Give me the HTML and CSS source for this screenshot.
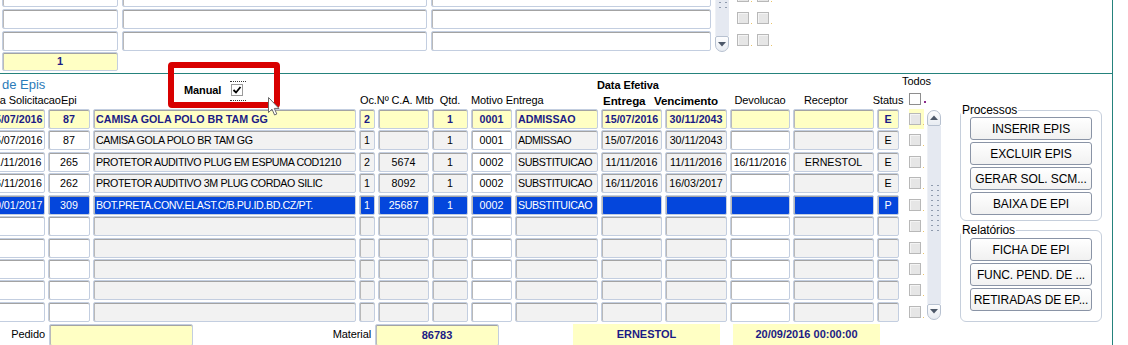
FILE: index.html
```html
<!DOCTYPE html>
<html lang="pt-BR">
  <head>
    <meta charset="UTF-8" />
    <title>Entrega de Epis</title>
    <link rel="stylesheet" href="styles.css">
  </head>
  <body>
    <div class="form">
      <div class="top">
        <div class="top-fields">
          <div class="trow"><span class="fld f1"></span><span class="fld f2"></span><span class="fld f3"></span></div>
          <div class="trow"><span class="fld f1"></span><span class="fld f2"></span><span class="fld f3"></span></div>
          <div class="trow"><span class="fld f1"></span><span class="fld f2"></span><span class="fld f3"></span></div>
          <div class="fld f1 yel">1</div>
        </div>
        <div class="sb sb-top">
          <div class="sb-track"><span class="grip short"></span></div>
          <div class="sb-btn down"><svg width="8" height="5" viewBox="0 0 8 5"><path d="M0 0H8L4 4.5Z" fill="#4d5869"/></svg></div>
        </div>
        <div class="top-checks">
          <span class="cb"></span><span class="cb"></span>
          <span class="cb"></span><span class="cb"></span>
          <span class="cb"></span><span class="cb"></span>
        </div>
      </div>

      <div class="lower">
        <div class="table">
          <div class="head">
            <div class="h h-title">de Epis</div>
            <div class="h h-manual">
              <b>Manual</b>
              <span class="focus"><span class="cb on"><svg width="10" height="10" viewBox="0 0 10 10"><path d="M1.5 5L4 7.5L8.5 2" fill="none" stroke="#000" stroke-width="1.8"/></svg></span></span>
            </div>
            <div class="h h-sol">Data Solicitacao<span>Epi</span></div>
            <div class="h h-oc">Oc.Nº C.A. Mtb</div>
            <div class="h h-qtd">Qtd.</div>
            <div class="h h-mot">Motivo Entrega</div>
            <div class="h h-data">Data Efetiva</div>
            <div class="h h-ent">Entrega</div>
            <div class="h h-venc">Vencimento</div>
            <div class="h h-dev">Devolucao</div>
            <div class="h h-rec">Receptor</div>
            <div class="h h-status">Status</div>
            <div class="h h-todos">Todos</div>
            <div class="h h-all"><span class="cb white"></span><span class="dot purple"></span></div>
          </div>

          <div class="rows">
            <div class="sb sb-grid">
              <div class="sb-btn up"><svg width="8" height="5" viewBox="0 0 8 5"><path d="M0 5H8L4 0.5Z" fill="#4d5869"/></svg></div>
              <div class="sb-track"><span class="grip"></span></div>
              <div class="sb-btn down"><svg width="8" height="5" viewBox="0 0 8 5"><path d="M0 0H8L4 4.5Z" fill="#4d5869"/></svg></div>
            </div>

            <div class="row cur">
              <span class="c w">15/07/2016</span><span class="c w">87</span>
              <span class="c l">CAMISA GOLA POLO BR TAM GG</span>
              <span class="c">2</span><span class="c"></span><span class="c">1</span>
              <span class="c w">0001</span><span class="c l">ADMISSAO</span>
              <span class="c">15/07/2016</span><span class="c">30/11/2043</span>
              <span class="c w"></span><span class="c"></span><span class="c">E</span>
              <span class="ck"><span class="cb"></span></span>
            </div>
            <div class="row">
              <span class="c w">15/07/2016</span><span class="c w">87</span>
              <span class="c l">CAMISA GOLA POLO BR TAM GG</span>
              <span class="c">1</span><span class="c"></span><span class="c">1</span>
              <span class="c w">0001</span><span class="c l">ADMISSAO</span>
              <span class="c">15/07/2016</span><span class="c">30/11/2043</span>
              <span class="c w"></span><span class="c"></span><span class="c">E</span>
              <span class="ck"><span class="cb"></span></span>
            </div>
            <div class="row">
              <span class="c w">11/11/2016</span><span class="c w">265</span>
              <span class="c l">PROTETOR AUDITIVO PLUG EM ESPUMA COD1210</span>
              <span class="c">2</span><span class="c">5674</span><span class="c">1</span>
              <span class="c w">0002</span><span class="c l">SUBSTITUICAO</span>
              <span class="c">11/11/2016</span><span class="c">11/11/2016</span>
              <span class="c w">16/11/2016</span><span class="c">ERNESTOL</span><span class="c">E</span>
              <span class="ck"><span class="cb"></span></span>
            </div>
            <div class="row">
              <span class="c w">16/11/2016</span><span class="c w">262</span>
              <span class="c l">PROTETOR AUDITIVO 3M PLUG CORDAO SILIC</span>
              <span class="c">1</span><span class="c">8092</span><span class="c">1</span>
              <span class="c w">0002</span><span class="c l">SUBSTITUICAO</span>
              <span class="c">16/11/2016</span><span class="c">16/03/2017</span>
              <span class="c w"></span><span class="c"></span><span class="c">E</span>
              <span class="ck"><span class="cb"></span></span>
            </div>
            <div class="row sel">
              <span class="c w">20/01/2017</span><span class="c w">309</span>
              <span class="c l">BOT.PRETA.CONV.ELAST.C/B.PU.ID.BD.CZ/PT.</span>
              <span class="c">1</span><span class="c">25687</span><span class="c">1</span>
              <span class="c w">0002</span><span class="c l">SUBSTITUICAO</span>
              <span class="c"></span><span class="c"></span>
              <span class="c w"></span><span class="c"></span><span class="c">P</span>
              <span class="ck"><span class="cb"></span></span>
            </div>
            <div class="row">
              <span class="c w"></span><span class="c w"></span><span class="c"></span>
              <span class="c"></span><span class="c"></span><span class="c"></span>
              <span class="c w"></span><span class="c"></span><span class="c"></span><span class="c"></span>
              <span class="c w"></span><span class="c"></span><span class="c"></span>
              <span class="ck"><span class="cb"></span></span>
            </div>
            <div class="row">
              <span class="c w"></span><span class="c w"></span><span class="c"></span>
              <span class="c"></span><span class="c"></span><span class="c"></span>
              <span class="c w"></span><span class="c"></span><span class="c"></span><span class="c"></span>
              <span class="c w"></span><span class="c"></span><span class="c"></span>
              <span class="ck"><span class="cb"></span></span>
            </div>
            <div class="row">
              <span class="c w"></span><span class="c w"></span><span class="c"></span>
              <span class="c"></span><span class="c"></span><span class="c"></span>
              <span class="c w"></span><span class="c"></span><span class="c"></span><span class="c"></span>
              <span class="c w"></span><span class="c"></span><span class="c"></span>
              <span class="ck"><span class="cb"></span></span>
            </div>
            <div class="row">
              <span class="c w"></span><span class="c w"></span><span class="c"></span>
              <span class="c"></span><span class="c"></span><span class="c"></span>
              <span class="c w"></span><span class="c"></span><span class="c"></span><span class="c"></span>
              <span class="c w"></span><span class="c"></span><span class="c"></span>
              <span class="ck"><span class="cb"></span></span>
            </div>
            <div class="row">
              <span class="c w"></span><span class="c w"></span><span class="c"></span>
              <span class="c"></span><span class="c"></span><span class="c"></span>
              <span class="c w"></span><span class="c"></span><span class="c"></span><span class="c"></span>
              <span class="c w"></span><span class="c"></span><span class="c"></span>
              <span class="ck"><span class="cb"></span></span>
            </div>
          </div>
        </div>

        <div class="side">
          <fieldset class="grp proc">
            <legend>Processos</legend>
            <div class="btns">
              <button>INSERIR EPIS</button>
              <button>EXCLUIR EPIS</button>
              <button>GERAR SOL. SCM...</button>
              <button>BAIXA DE EPI</button>
            </div>
          </fieldset>
          <fieldset class="grp rel">
            <legend>Relatórios</legend>
            <div class="btns">
              <button>FICHA DE EPI</button>
              <button>FUNC. PEND. DE ...</button>
              <button>RETIRADAS DE EP...</button>
            </div>
          </fieldset>
        </div>
      </div>

      <div class="footer">
        <span class="flbl l-ped">Pedido</span>
        <span class="fld yel f-ped"></span>
        <span class="flbl l-mat">Material</span>
        <span class="fld yel f-mat">86783</span>
        <span class="flat f-rec">ERNESTOL</span>
        <span class="flat f-dt">20/09/2016 00:00:00</span>
      </div>
    </div>

    <div class="annot"></div>
    <svg class="cursor" width="12" height="19" viewBox="0 0 12 19"><path d="M0.5 0.5V15.5L4 12.2L6.6 18L8.8 17L6.3 11.4H11Z" fill="#fff" stroke="#6a6a6a" stroke-width="1"/></svg>
  </body>
</html>
```

FILE: styles.css
```css
* {
  box-sizing: border-box;
}

body {
  margin: 0;
  width: 1128px;
  height: 345px;
  overflow: hidden;
  position: relative;
  background: #fff;
  font-family: "Liberation Sans", Arial, sans-serif;
  font-size: 11px;
  color: #000;
}

.form {
  width: 1113px;
  height: 345px;
  border-right: 1px solid #25827c;
  overflow: hidden;
}

/* top block */

.top {
  display: flex;
  height: 74px;
  padding-left: 2px;
  border-bottom: 1px solid #25827c;
  overflow: hidden;
}

.top-fields {
  display: flex;
  flex-direction: column;
  gap: 2px;
  margin-top: -13px;
}

.trow {
  display: flex;
  gap: 4px;
}

.fld {
  height: 20px;
  background: #fff;
  border: 1px solid #c3cee0;
  border-radius: 2px;
  box-shadow: inset 0 1px 0 #a3a3a3, inset 1px 0 0 #b9b9b9;
}

.f1 { width: 116px; }
.f2 { width: 305px; }
.f3 { width: 280px; }

.yel {
  background: #ffffc4;
  color: #1b1b85;
  font-weight: bold;
  text-align: center;
  line-height: 18px;
}

.top-fields .yel {
  height: 19px;
  margin-top: -1px;
  line-height: 17px;
}

.top-checks {
  display: grid;
  grid-template-columns: 12px 12px;
  column-gap: 8px;
  row-gap: 10px;
  align-content: start;
  margin: -10px 0 0 8px;
}

/* checkboxes */

.cb {
  display: block;
  position: relative;
  width: 12px;
  height: 12px;
  border: 1px solid #b8b8b8;
  background: #e6e6e6;
  box-shadow: inset 1px 1px 0 #f4f4f4;
}

.cb::after {
  content: "";
  position: absolute;
  right: -4px;
  bottom: -1px;
  width: 1px;
  height: 1px;
  background: #eac46a;
}

.cb.white {
  background: #fff;
  border-color: #8e8e8e;
  box-shadow: none;
}

.cb.white::after,
.cb.on::after {
  display: none;
}

.cb.on {
  background: #fff;
  border-color: #9a9a9a;
  box-shadow: none;
  display: flex;
  align-items: center;
  justify-content: center;
}

.dot {
  width: 2px;
  height: 2px;
  margin: 8px 0 0 3px;
}

.dot.purple {
  background: #8a2a8a;
}

/* scrollbars */

.sb {
  display: flex;
  flex-direction: column;
  width: 14px;
}

.sb-top {
  height: 52px;
  margin-left: 4px;
}

.sb-track {
  flex: 1;
  display: flex;
  align-items: center;
  justify-content: center;
  background: #e5e9f1;
  border-left: 1px solid #eef1f6;
}

.sb-top .sb-track {
  align-items: flex-start;
}

.grip {
  width: 12px;
  height: 50px;
  margin-bottom: 14px;
  background-image: radial-gradient(circle, #8f9bae 0.7px, transparent 1px);
  background-size: 6px 5px;
}

.grip.short {
  height: 8px;
  margin: 0;
}

.sb-btn {
  height: 16px;
  display: flex;
  align-items: center;
  justify-content: center;
  border: 1px solid #b7c1d0;
  background: linear-gradient(#fdfdfe, #e8ecf2);
}

.sb-btn.up {
  border-radius: 7px 7px 2px 2px;
}

.sb-btn.down {
  border-radius: 2px 2px 7px 7px;
}

/* lower block */

.lower {
  display: flex;
  margin-left: -14px;
}

.table {
  --cols: 59px 42px 263px 16px 51px 36px 41px 83px 61px 62px 60px 81px 22px 22px 14px;
  display: flex;
  flex-direction: column;
}

.head {
  display: grid;
  grid-template-columns: var(--cols);
  grid-template-rows: 17.6px 14.5px;
  column-gap: 3px;
  row-gap: 1.45px;
  margin-bottom: 1.45px;
}

.h {
  white-space: nowrap;
  align-self: center;
  letter-spacing: -0.1px;
  line-height: 13px;
}

.h-title {
  grid-column: 1 / 3;
  grid-row: 1;
  align-self: end;
  padding-left: 16px;
  font-size: 13px;
  line-height: 15px;
  color: #2b7bb9;
  letter-spacing: 0;
}

.h-manual {
  grid-column: 3;
  grid-row: 1 / 3;
  display: flex;
  align-items: center;
  gap: 9px;
  padding-left: 91px;
}

.focus {
  display: flex;
  padding: 2px 3px 4px 1px;
  border-top: 1px dotted #333;
  border-bottom: 1px dotted #333;
}

.h-sol {
  grid-column: 1 / 3;
  grid-row: 2;
  margin-left: -3px;
}

.h-oc {
  grid-column: 4 / 6;
  grid-row: 2;
  padding-left: 1px;
}

.h-qtd {
  grid-column: 6;
  grid-row: 2;
  justify-self: center;
}

.h-mot {
  grid-column: 7 / 9;
  grid-row: 2;
}

.h-data {
  grid-column: 9 / 11;
  grid-row: 1;
  align-self: end;
  margin-left: -4px;
  font-weight: bold;
}

.h-ent,
.h-venc {
  grid-row: 2;
  font-weight: bold;
  font-size: 11.6px;
}

.h-ent {
  grid-column: 9;
  margin-left: 2px;
}

.h-venc {
  grid-column: 10;
  margin-left: -11px;
}

.h-dev {
  grid-column: 11;
  grid-row: 2;
  justify-self: center;
}

.h-rec {
  grid-column: 12;
  grid-row: 2;
  padding-left: 11px;
}

.h-status {
  grid-column: 13;
  grid-row: 2;
  justify-self: center;
}

.h-todos {
  grid-column: 14 / 16;
  grid-row: 1;
  align-self: start;
  margin-top: 1px;
}

.h-all {
  grid-column: 14 / 16;
  grid-row: 2;
  align-self: start;
  display: flex;
  padding-left: 7px;
}

.rows {
  display: grid;
  grid-template-columns: var(--cols);
  grid-template-rows: repeat(10, 20px);
  column-gap: 3px;
  row-gap: 1.45px;
}

.row {
  display: contents;
}

.c {
  height: 20px;
  padding: 0 2px;
  overflow: hidden;
  white-space: nowrap;
  text-align: center;
  line-height: 18px;
  font-size: 10.7px;
  background: #f2f2f2;
  border: 1px solid #c3cee0;
  border-radius: 2px;
  box-shadow: inset 0 1px 0 #a3a3a3, inset 1px 0 0 #b9b9b9;
}

.c.w {
  background: #fff;
}

.c.l {
  text-align: left;
  letter-spacing: -0.4px;
}

.cur .c {
  background: #ffffc4;
  color: #1b1b85;
  font-weight: bold;
  letter-spacing: 0;
}

.sel .c {
  background: #0446dc;
  color: #fff;
}

.ck {
  display: flex;
  align-items: center;
  margin-left: 7px;
}

.cur .ck {
  background: #ffffc4;
}

.sb-grid {
  grid-column: 15;
  grid-row: 1 / -1;
  margin: 1px 0 2px;
}

/* side panel */

.side {
  display: flex;
  flex-direction: column;
  gap: 2px;
  width: 142px;
  margin: 29px 0 0 19px;
}

.grp {
  margin: 0;
  padding: 0;
  min-width: 0;
  border: 1px solid #c6cfdc;
  border-radius: 6px;
}

.grp legend {
  padding: 0 1px;
  font-size: 12px;
  line-height: 14px;
  letter-spacing: -0.1px;
}

.proc {
  height: 118px;
}

.rel {
  height: 99px;
}

.rel .btns {
  padding-top: 1px;
}

.btns {
  display: flex;
  flex-direction: column;
  gap: 2px;
  padding: 0 9px;
}

button {
  height: 23px;
  padding: 0;
  font-family: "Liberation Sans", Arial, sans-serif;
  font-size: 12px;
  letter-spacing: -0.1px;
  color: #000;
  background: linear-gradient(#ffffff, #f1f1f1);
  border: 1px solid #8a94a6;
  border-radius: 3px;
  white-space: nowrap;
}

/* footer */

.footer {
  display: flex;
  margin-top: 2px;
  height: 22px;
}

.flbl {
  text-align: right;
  padding-top: 3px;
  line-height: 14px;
  letter-spacing: -0.1px;
}

.l-ped { width: 45px; }
.l-mat { width: 178px; }

.footer .fld {
  height: 22px;
  margin-left: 4px;
  line-height: 20px;
}

.f-ped { width: 144px; }
.f-mat { width: 124px; }

.flat {
  height: 22px;
  width: 147px;
  background: #ffffc4;
  color: #1b1b85;
  font-weight: bold;
  text-align: center;
  line-height: 20px;
}

.f-rec { margin-left: 74px; }
.f-dt { margin-left: 13px; }

/* overlays */

.annot {
  position: absolute;
  left: 168px;
  top: 62px;
  width: 112px;
  height: 46px;
  border: 6px solid #d80000;
  border-radius: 4px;
}

.cursor {
  position: absolute;
  left: 268px;
  top: 97px;
}
```
